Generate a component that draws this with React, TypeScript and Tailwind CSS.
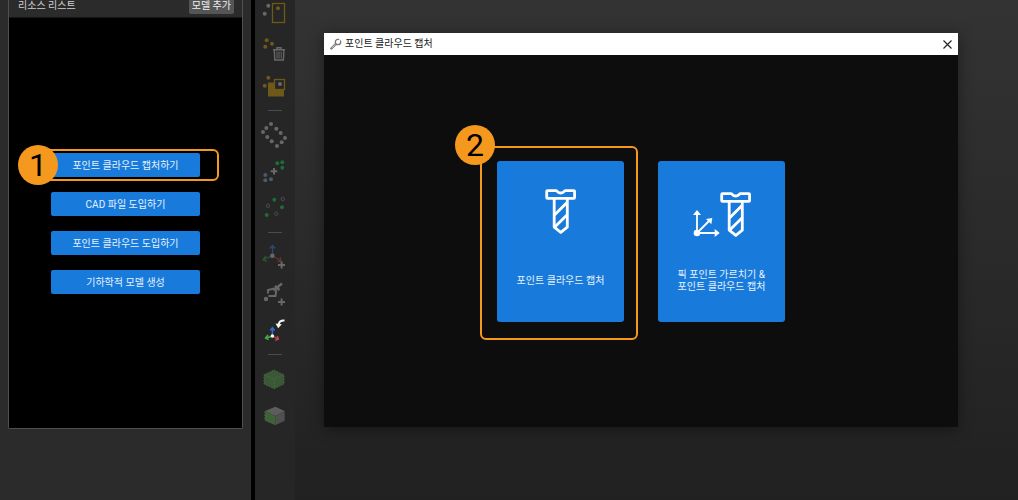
import type { ReactNode } from 'react';

const GOLD = '#6f5818';
const GRAY = '#686868';
const GREEN = '#1f6b35';

type Dot = [number, number];

const Dots = ({ points, fill }: { points: Dot[]; fill: string }) => (
  <>
    {points.map(([x, y]) => (
      <circle key={`${x}-${y}`} cx={x} cy={y} r="2" fill={fill} />
    ))}
  </>
);

const ToolButton = ({ label, children }: { label: string; children: ReactNode }) => (
  <button type="button" aria-label={label} className="block h-[37px] w-10 shrink-0">
    <svg viewBox="0 0 40 37" className="h-full w-full" fill="none">
      {children}
    </svg>
  </button>
);

const Separator = () => (
  <div className="flex h-[11px] w-10 shrink-0 items-center justify-center">
    <div className="h-px w-3.5 bg-[#4c4c4c]" />
  </div>
);

const Toolbar = () => (
  <nav className="flex w-10 shrink-0 flex-col bg-[#262626]">
    <div className="-mt-1.5 flex flex-col">
      <ToolButton label="Select region">
        <rect x="17.5" y="9.5" width="12" height="19" stroke={GOLD} strokeWidth="1.3" />
        <Dots points={[[13.3, 11.7], [9.7, 19.7]]} fill={GRAY} />
        <Dots points={[[23, 14.3]]} fill={GOLD} />
      </ToolButton>
      <ToolButton label="Delete points">
        <Dots points={[[11.7, 9.3], [17, 12.7], [10.3, 15.7]]} fill={GOLD} />
        <path d="M18 18.700h12M22 18.500v-1.800h4v1.800M19.300 19.500l.500 9.500h8.600l.500-9.500" stroke={GRAY} strokeWidth="1.400" />
        <path d="M22 20.500v7M24 20.500v7M26.200 20.500v7" stroke={GRAY} />
      </ToolButton>
      <ToolButton label="Crop points">
        <Dots points={[[13.3, 9.7], [9.7, 17.7]]} fill={GOLD} />
        <rect x="13" y="14.5" width="16" height="14" fill={GOLD} />
        <rect x="19.5" y="11.5" width="10" height="10" fill="#262626" stroke={GOLD} strokeWidth="1.3" />
        <Dots points={[[25, 16]]} fill={GRAY} />
      </ToolButton>
      <Separator />
      <ToolButton label="Sample points">
        <Dots
          points={[
            [16, 8], [11.3, 12], [8, 16], [12.3, 21], [16.7, 25.3],
            [22, 30], [26.7, 26.3], [30, 22], [25.7, 17], [21.3, 12.7],
          ]}
          fill={GRAY}
        />
      </ToolButton>
      <ToolButton label="Merge points">
        <Dots points={[[22.3, 10.3], [27.3, 9.3], [27.3, 14.7]]} fill={GREEN} />
        <path d="M19 15v6.500M15.700 18.200h6.600" stroke={GRAY} strokeWidth="2" />
        <Dots points={[[10.3, 22], [10.3, 27.3], [16, 26.3]]} fill="#4a596e" />
      </ToolButton>
      <ToolButton label="Filter points">
        <Dots points={[[19.3, 9.7], [27, 17.3], [11.7, 25]]} fill={GREEN} />
        <g stroke="#4d4d4d">
          <circle cx="27.7" cy="9" r="1.7" />
          <circle cx="13" cy="15.7" r="1.7" />
          <circle cx="21.3" cy="23.7" r="1.7" />
        </g>
      </ToolButton>
      <Separator />
      <ToolButton label="Add frame">
        <path d="M17.5 17V7.500M14.800 10.500l2.700-3 2.700 3" stroke="#2c4a70" strokeWidth="1.300" />
        <path d="M17 18l-9 3.700M11 18l-3 3.700 4 1.800" stroke="#2f5532" strokeWidth="1.300" />
        <path d="M18 18l8 5M22.500 23.500l3.500-.5-1-4" stroke="#663235" strokeWidth="1.300" />
        <circle cx="17.4" cy="17.7" r="2.2" fill={GRAY} />
        <path d="M26.600 23.500v7M23 27h7" stroke={GRAY} strokeWidth="2" />
      </ToolButton>
      <ToolButton label="Add robot">
        <circle cx="11" cy="24" r="2.2" fill={GRAY} />
        <path d="M13 18.500V15l6.500-1.500M13.500 21h7l.8-6" stroke={GRAY} strokeWidth="2" />
        <path d="M18.500 15.500l8.500-7M20 11l4.500 4" stroke={GRAY} strokeWidth="2.400" />
        <path d="M26.600 23.500v7M23 27h7" stroke={GRAY} strokeWidth="2" />
      </ToolButton>
      <ToolButton label="Rotate frame">
        <path d="M17.400 23.500v-7M15.200 18.500l2.200-2.700 2.200 2.700" stroke="#2f6fd0" strokeWidth="1.500" />
        <path d="M17 24.300l-6 1.700M13 23l-2.400 3 3 1.600" stroke="#46ad4c" strokeWidth="1.500" />
        <path d="M18 24.300l5 2.500M20.300 28.300l3-1.300-1-3" stroke="#b8484c" strokeWidth="1.500" />
        <circle cx="17.4" cy="24" r="1.8" fill="#f5f5f5" />
        <path d="M29.500 8.500c-3.500-.3-5.500 1.200-6 4.300" stroke="#f5f5f5" strokeWidth="2" />
        <path d="M20.500 11.500l6.300.8-3.600 4z" fill="#f5f5f5" />
      </ToolButton>
      <Separator />
      <ToolButton label="Point cloud model">
        <path d="M19 10l10 4.700V24l-10 4.700L9 24v-9.300z" fill="#3a5736" />
        <path d="M19 10l10 4.700V24l-10 4.700L9 24v-9.300z" stroke="#416b3a" strokeDasharray="1.500 1.500" />
        <path d="M10 15l9 4.500 9-4.500M19 20v8" stroke="#446b3d" strokeDasharray="1.500 1" />
      </ToolButton>
      <ToolButton label="Surface model">
        <path d="M20.300 9.700l9.400 4.300-9.400 5L10 14z" fill="#5d5d5d" />
        <path d="M29.700 14v9.700l-9.400 4.600V19z" fill="#505050" />
        <path d="M10 14l10.300 5v9.300L10 23.700z" fill="#3d6337" />
        <path d="M10 14.500V24" stroke="#3d6337" strokeWidth="1.500" strokeDasharray="1.500 1.500" />
      </ToolButton>
    </div>
  </nav>
);

const StepBadge = ({ step, className }: { step: number; className: string }) => (
  <span
    className={`pointer-events-none absolute flex size-10 items-center justify-center rounded-full bg-[#f5981e] text-[32px] leading-10 text-black ${className}`}
  >
    {step}
  </span>
);

const Outline = ({ className }: { className: string }) => (
  <span className={`pointer-events-none absolute rounded-md border-2 border-[#f5981e] ${className}`} />
);

const resourceActions = [
  '포인트 클라우드 캡처하기',
  'CAD 파일 도입하기',
  '포인트 클라우드 도입하기',
  '기하학적 모델 생성',
];

const ResourcePanel = () => (
  <aside className="w-[251px] shrink-0 bg-[#2b2b2b] pr-2 pb-[71px] pl-2">
    <section className="flex h-full flex-col rounded-b-xs border border-t-0 border-[#505050] bg-black">
      <header className="flex h-[18px] shrink-0 items-start justify-between border-b border-[#161616] bg-[#2b2b2b] pr-2 pl-[9px] leading-3 text-[#d0d0d0]">
        <h2>리소스 리스트</h2>
        <button type="button" className="flex h-3.5 items-start rounded-b-xs bg-[#555555] px-[3px] text-[#f0f0f0]">
          모델 추가
        </button>
      </header>
      <ul className="mt-[135px] flex flex-col items-center gap-[15px]">
        {resourceActions.map((label, i) => (
          <li key={label} className="relative w-[149px]">
            <button type="button" className="h-6 w-full rounded-xs bg-[#187bdc] text-[#e6f1fc]">
              {label}
            </button>
            {i === 0 && (
              <>
                <Outline className="-top-1 -right-[19px] -bottom-1 -left-3" />
                <StepBadge step={1} className="-top-2 -left-[33px]" />
              </>
            )}
          </li>
        ))}
      </ul>
    </section>
  </aside>
);

const Screw = () => (
  <g stroke="#ffffff" strokeWidth="2.800" strokeLinejoin="round" fill="none">
    <path d="M2.500 1.600H11c1.200 0 1.800 2.400 4.700 2.400s3.500-2.400 4.700-2.400h8.400q.8 0 .8.800v6.200q0 .8-.8.800H2.500q-.8 0-.8-.8V2.400q0-.8.800-.8z" />
    <path d="M9.200 10v28.200l6.600 5.100 6.500-5.100V10" />
    <path d="M9.500 26L22 13.500M9.500 38.200L22 26" />
  </g>
);

const ScrewIcon = () => (
  <svg width="32" height="48" viewBox="0 0 32 48" aria-hidden="true">
    <Screw />
  </svg>
);

const PickPointIcon = () => (
  <svg width="59" height="51" viewBox="0 0 59 51" aria-hidden="true">
    <g transform="translate(28 3)">
      <Screw />
    </g>
    <path d="M5 44V25M5 44h19M5 44l13-13" stroke="#ffffff" strokeWidth="1.800" />
    <circle cx="5" cy="44" r="3.3" fill="#ffffff" />
    <path d="M5 21l4 5H1zM27.700 44l-5 4v-8zM20.300 29l-1 6.300-5.300-5.300z" fill="#ffffff" />
  </svg>
);

const CaptureCard = ({ icon, children }: { icon: ReactNode; children: ReactNode }) => (
  <button
    type="button"
    className="flex h-[161px] w-[127px] flex-col items-center rounded-[3px] bg-[#187bdc] pt-7 text-[#e6f1fc]"
  >
    <span className="h-20">{icon}</span>
    <span className="flex h-6 items-center text-left leading-3">
      <span>{children}</span>
    </span>
  </button>
);

const CaptureDialog = () => (
  <div
    role="dialog"
    aria-labelledby="capture-title"
    className="mt-[33px] mr-[60px] mb-[73px] ml-[29px] flex flex-1 flex-col bg-[#0d0d0d] shadow-[0_2px_14px_rgba(0,0,0,0.4)]"
  >
    <header className="flex h-[22px] shrink-0 items-center bg-white px-1.5 text-[#1a1a1a]">
      <svg width="12" height="12" viewBox="0 0 12 12" fill="none" aria-hidden="true">
        <path d="M1.300 10.500l4-4" stroke="#777777" strokeWidth="2.400" strokeLinecap="round" />
        <path d="M1.500 10.300l4-4" stroke="#dddddd" strokeWidth=".8" />
        <circle cx="8" cy="4" r="2.7" stroke="#777777" strokeWidth="1.300" />
        <path d="M8 4l2.500-3" stroke="#ffffff" strokeWidth="1.200" />
      </svg>
      <h1 id="capture-title" className="ml-[3px] flex-1 leading-3">
        포인트 클라우드 캡처
      </h1>
      <button type="button" aria-label="Close">
        <svg width="9" height="9" viewBox="0 0 9 9">
          <path d="M.500.500l8 8M8.500.500l-8 8" stroke="#222222" strokeWidth="1.100" />
        </svg>
      </button>
    </header>
    <div className="flex flex-1 items-center justify-center gap-[34px]">
      <div className="relative">
        <CaptureCard icon={<ScrewIcon />}>포인트 클라우드 캡처</CaptureCard>
        <Outline className="-top-[15px] -right-3.5 -bottom-[18px] -left-[17px]" />
        <StepBadge step={2} className="-top-9 -left-[42px]" />
      </div>
      <CaptureCard icon={<PickPointIcon />}>
        픽 포인트 가르치기 &amp;
        <br />
        포인트 클라우드 캡처
      </CaptureCard>
    </div>
  </div>
);

export default function App() {
  return (
    <div
      lang="ko"
      className="flex h-screen overflow-hidden bg-black font-[Roboto,'Noto_Sans_CJK_KR',sans-serif] text-[10px]"
    >
      <ResourcePanel />
      <div className="w-1 shrink-0 bg-black" />
      <Toolbar />
      <main className="flex min-w-0 flex-1 bg-linear-to-b from-[#333333] to-[#212121]">
        <CaptureDialog />
      </main>
    </div>
  );
}
